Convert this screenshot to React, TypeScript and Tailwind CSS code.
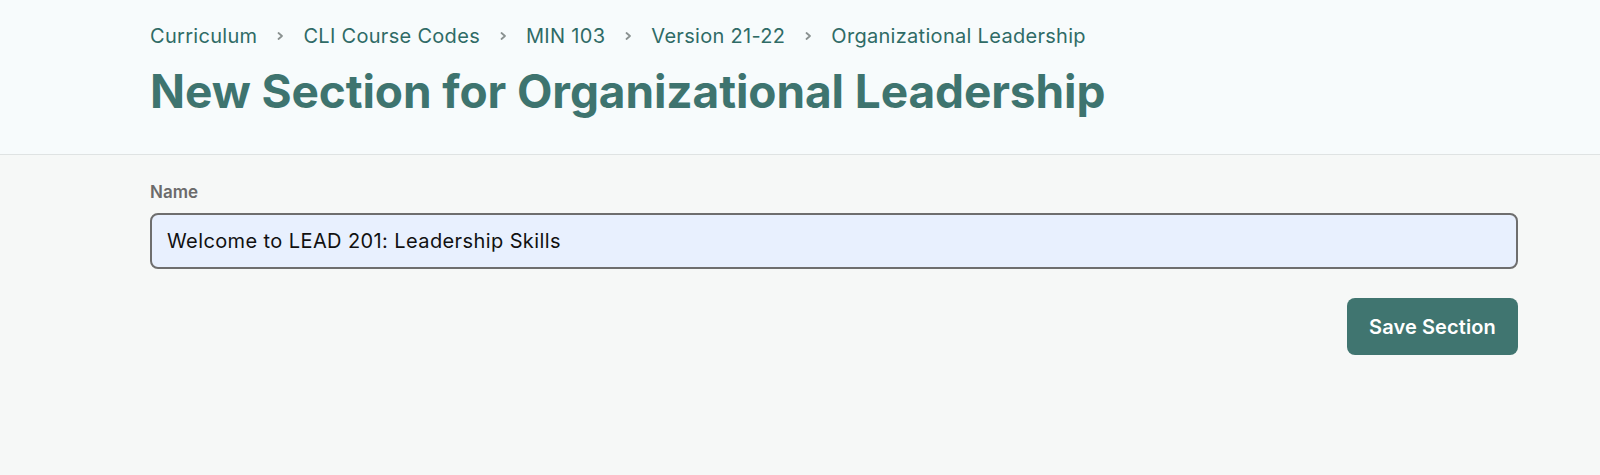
import React from "react";

const crumbs = ["Curriculum", "CLI Course Codes", "MIN 103", "Version 21-22", "Organizational Leadership"];

export default function App() {
  return (
    <div className="min-h-[475px] bg-[#f6f8f7]" style={{ fontFamily: "Inter, 'Noto Sans', sans-serif" }}>
      <header className="bg-[#f7fbfc] border-b border-[#dfe3e3] pl-[150px] pr-[82px] pt-[22px] h-[155px]">
        <nav className="flex items-center text-[20px] tracking-[0.3px] text-[#2f6b66] leading-[28px]">
          {crumbs.map((c, i) => (
            <React.Fragment key={c}>
              {i > 0 && (
                <svg className="mx-[17px] shrink-0" width="12" height="12" viewBox="0 0 12 12" fill="none">
                  <path d="M4.5 3 L8 6 L4.5 9" stroke="#8a9190" strokeWidth="1.8" strokeLinecap="round" strokeLinejoin="round" />
                </svg>
              )}
              <span>{c}</span>
            </React.Fragment>
          ))}
        </nav>
        <h1 className="mt-[13px] text-[46px] font-bold leading-[56px] tracking-[-0.1px] text-[#3e746f]">
          New Section for Organizational Leadership
        </h1>
      </header>
      <main className="pl-[150px] pr-[82px] pt-[26px]">
        <label className="block text-[17px] font-semibold text-[#6b6b6b] leading-[22px]">Name</label>
        <div className="mt-[10px] h-[56px] rounded-[8px] border-2 border-[#6e6e6e] bg-[#e8f0fe] flex items-center px-[15px] text-[20px] tracking-[0.4px] text-[#111]">
          Welcome to LEAD 201: Leadership Skills
        </div>
        <div className="flex justify-end mt-[29px]">
          <button className="h-[57px] w-[171px] rounded-[8px] bg-[#407570] text-white text-[20px] font-semibold tracking-[0.1px]">
            Save Section
          </button>
        </div>
      </main>
    </div>
  );
}
